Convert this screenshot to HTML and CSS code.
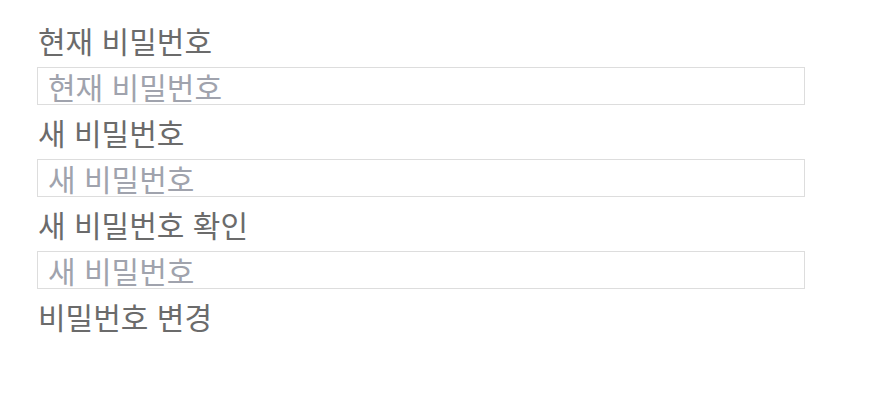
FILE: index.html
```html
<!DOCTYPE html>
<html lang="ko">
<head>
<meta charset="utf-8">
<link rel="stylesheet" href="styles.css">
</head>
<body>
<form class="form">
  <label class="label">현재 비밀번호</label>
  <input class="input" type="password" placeholder="현재 비밀번호">
  <label class="label">새 비밀번호</label>
  <input class="input" type="password" placeholder="새 비밀번호">
  <label class="label">새 비밀번호 확인</label>
  <input class="input" type="password" placeholder="새 비밀번호">
  <div class="submit">비밀번호 변경</div>
</form>
</body>
</html>
```
FILE: styles.css
```css
html, body { margin: 0; background: #fff; }
.form {
  display: flex;
  flex-direction: column;
  align-items: flex-start;
  padding: 13px 0 0 37px;
  font-family: "Noto Sans CJK KR", sans-serif;
  color: #6b6b6b;
}
.label {
  font-size: 30px;
  line-height: 54px;
  padding-left: 1px;
}
.input {
  box-sizing: border-box;
  width: 768px;
  height: 38px;
  margin: 0;
  padding: 0 10px;
  border: 1px solid #ddd;
  font-family: "Noto Sans CJK KR", sans-serif;
  font-size: 30px;
  line-height: 36px;
  outline: none;
}
.input::placeholder { color: #a0a3ad; }
.submit {
  font-size: 30px;
  line-height: 54px;
  padding-left: 1px;
}
```
